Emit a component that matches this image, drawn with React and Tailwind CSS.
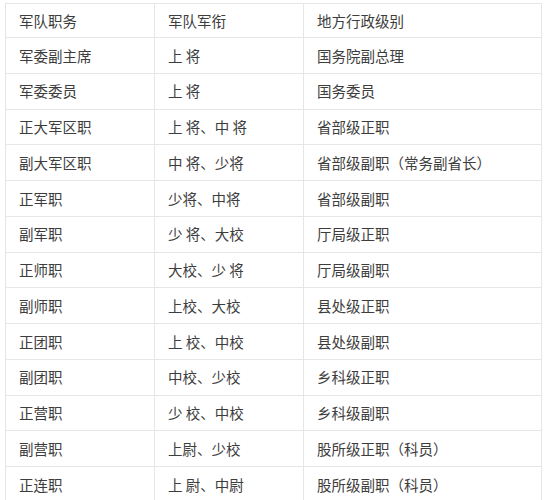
import React from "react";

const rows = [
  ["军委副主席", "上 将", "国务院副总理"],
  ["军委委员", "上 将", "国务委员"],
  ["正大军区职", "上 将、中 将", "省部级正职"],
  ["副大军区职", "中 将、少将", "省部级副职（常务副省长）"],
  ["正军职", "少将、中将", "省部级副职"],
  ["副军职", "少 将、大校", "厅局级正职"],
  ["正师职", "大校、少 将", "厅局级副职"],
  ["副师职", "上校、大校", "县处级正职"],
  ["正团职", "上 校、中校", "县处级副职"],
  ["副团职", "中校、少校", "乡科级正职"],
  ["正营职", "少 校、中校", "乡科级副职"],
  ["副营职", "上尉、少校", "股所级正职（科员）"],
  ["正连职", "上 尉、中尉", "股所级副职（科员）"],
];

// one table row, header is a bit shorter
const Row = ({ cells, head }) => (
  <tr className={head ? "h-[34px]" : "h-[35.75px]"}>
    {cells.map((c, i) => (
      <td
        key={i}
        className="border border-[#e6e6e6] pl-[13px] pt-[1px] align-middle whitespace-pre"
      >
        {c}
      </td>
    ))}
  </tr>
);

export default function App() {
  return (
    <div className="w-[545px] h-[500px] overflow-hidden bg-white pl-[5px] pt-[3px]">
      <table
        className="border-collapse table-fixed text-[14.5px] leading-none text-[#3d3d3d]"
        style={{ fontFamily: '"Noto Sans CJK SC", "Noto Sans", sans-serif' }}
      >
        <colgroup>
          <col className="w-[149px]" />
          <col className="w-[149px]" />
          <col className="w-[238px]" />
        </colgroup>
        <tbody>
          <Row head cells={["军队职务", "军队军衔", "地方行政级别"]} />
          {rows.map((r, i) => (
            <Row key={i} cells={r} />
          ))}
        </tbody>
      </table>
    </div>
  );
}
